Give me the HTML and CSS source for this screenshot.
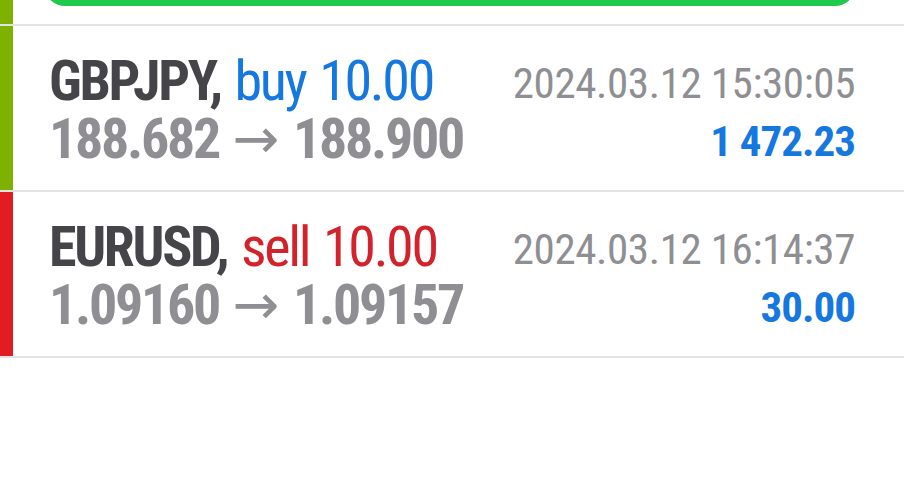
FILE: index.html
```html
<!DOCTYPE html>
<html lang="en">
<head>
    <meta charset="UTF-8">
    <meta name="viewport" content="width=device-width, initial-scale=1.0">
    <title>History</title>
    <link rel="stylesheet" href="styles.css">
</head>
<body>
    <!-- end of the previous row, its button cut at the top -->
    <div class="row row-top">
        <div class="strip strip-buy"></div>
        <div class="top-body">
            <button type="button" class="btn-green"></button>
        </div>
    </div>

    <div class="row">
        <div class="strip strip-buy"></div>
        <div class="deal">
            <div class="deal-left">
                <div class="line-main"><span class="symbol">GBPJPY,</span> <span class="buy">buy 10.00</span></div>
                <div class="line-price">188.682 <span class="arrow">&rarr;</span> 188.900</div>
            </div>
            <div class="deal-right">
                <div class="time">2024.03.12 15:30:05</div>
                <div class="profit">1 472.23</div>
            </div>
        </div>
    </div>

    <div class="row">
        <div class="strip strip-sell"></div>
        <div class="deal">
            <div class="deal-left">
                <div class="line-main"><span class="symbol">EURUSD,</span> <span class="sell">sell 10.00</span></div>
                <div class="line-price">1.09160 <span class="arrow">&rarr;</span> 1.09157</div>
            </div>
            <div class="deal-right">
                <div class="time">2024.03.12 16:14:37</div>
                <div class="profit">30.00</div>
            </div>
        </div>
    </div>
</body>
</html>
```

FILE: styles.css
```css
body {
    margin: 0;
    background: #fff;
    font-family: "Roboto Condensed", "Liberation Sans Narrow", Roboto, sans-serif;
    font-stretch: condensed;
}

.row {
    display: flex;
    border-bottom: 2px solid #e3e3e3;
}

.row-top {
    height: 24px;
    overflow: hidden;
}

.strip {
    width: 13px;
    flex: none;
}

.strip-buy {
    background-color: #7db300;
}

.strip-sell {
    background-color: #e11d22;
}

.top-body {
    flex: 1;
    padding: 0 49px 0 32px;
}

.btn-green {
    display: block;
    width: 100%;
    height: 40px;
    margin-top: -34px;
    border: none;
    border-radius: 22px;
    background-color: #1ec94c;
}

.deal {
    flex: 1;
    display: flex;
    justify-content: space-between;
    align-items: flex-start;
    height: 164px;
    box-sizing: border-box;
    padding: 26px 49px 0 36px;
}

.deal-left {
    font-size: 56px;
    line-height: 58px;
    letter-spacing: -2.3px;
    word-spacing: 3px;
}

.symbol {
    font-weight: bold;
    color: #444449;
}

.buy {
    color: #1577e0;
}

.sell {
    color: #d3222a;
}

.line-price {
    font-weight: bold;
    color: #8e8e93;
}

.arrow {
    font-family: "DejaVu Sans", sans-serif;
    font-weight: normal;
    font-stretch: normal;
    letter-spacing: 0;
}

.deal-right {
    padding-top: 2px;
    text-align: right;
    font-size: 43px;
    line-height: 58px;
    letter-spacing: -0.4px;
}

.time {
    color: #8e8e93;
}

.profit {
    font-weight: bold;
    color: #1577e0;
    letter-spacing: -1px;
}
```
